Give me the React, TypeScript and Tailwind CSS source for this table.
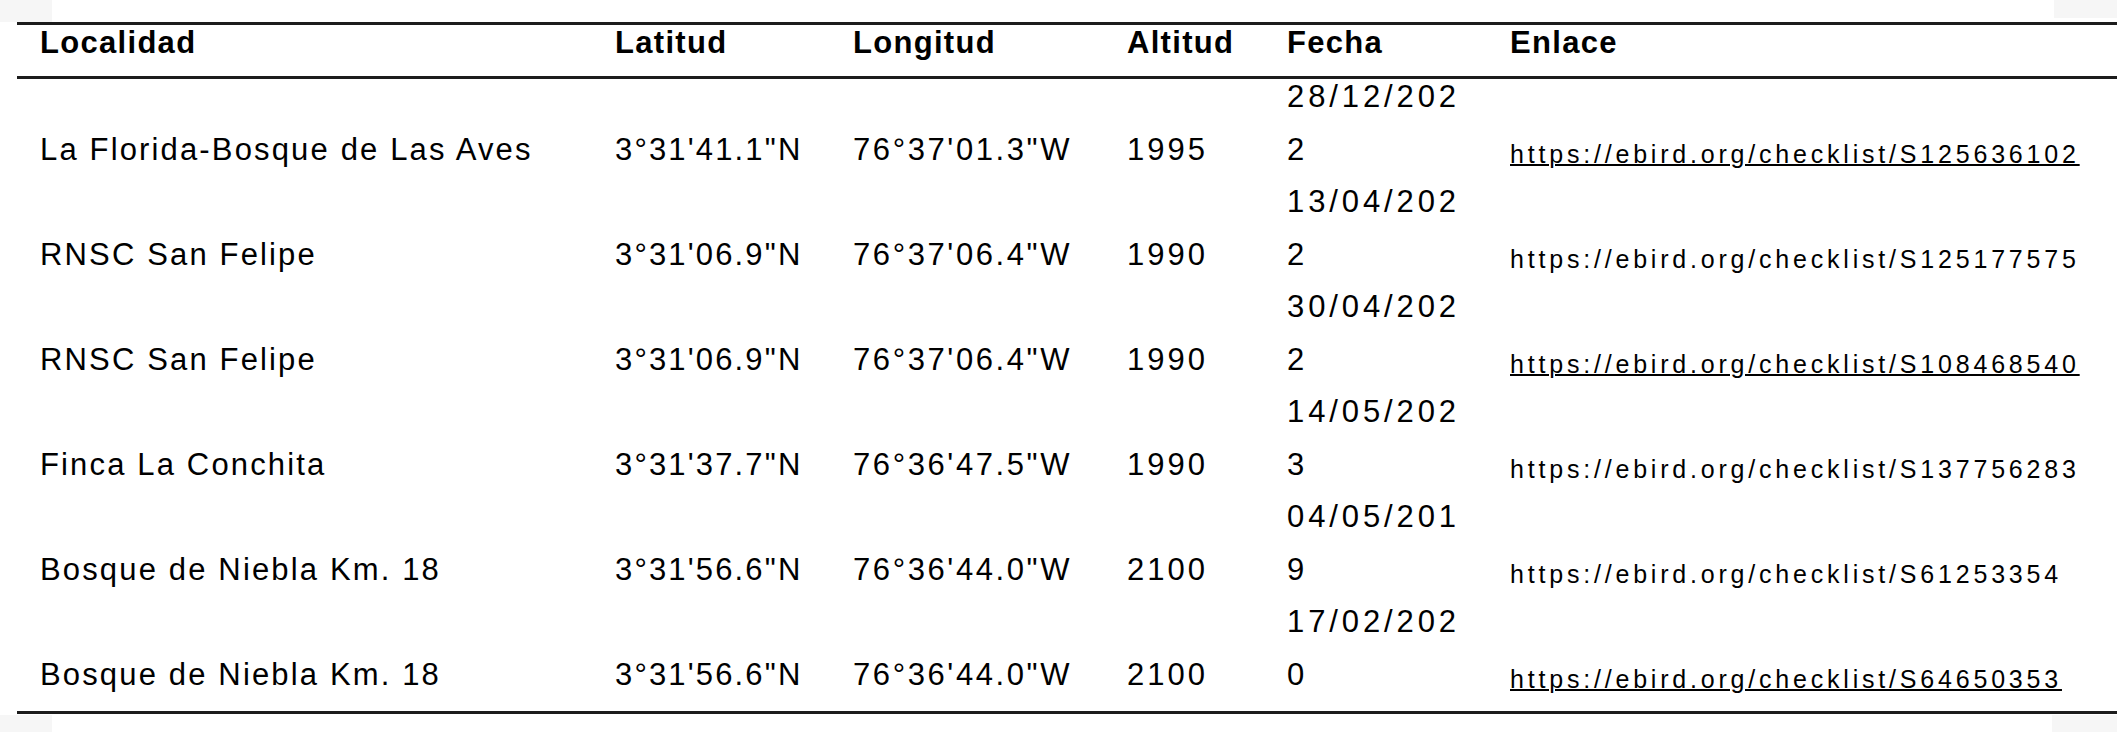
const cols = "grid grid-cols-[598px_238px_274px_160px_223px_1fr]";

const header = ["Localidad", "Latitud", "Longitud", "Altitud", "Fecha", "Enlace"];

const rows = [
  {
    loc: "La Florida-Bosque de Las Aves",
    lat: "3°31'41.1\"N",
    lon: "76°37'01.3\"W",
    alt: "1995",
    date: ["28/12/202", "2"],
    link: "https://ebird.org/checklist/S125636102",
    underline: true,
  },
  {
    loc: "RNSC San Felipe",
    lat: "3°31'06.9\"N",
    lon: "76°37'06.4\"W",
    alt: "1990",
    date: ["13/04/202", "2"],
    link: "https://ebird.org/checklist/S125177575",
    underline: false,
  },
  {
    loc: "RNSC San Felipe",
    lat: "3°31'06.9\"N",
    lon: "76°37'06.4\"W",
    alt: "1990",
    date: ["30/04/202", "2"],
    link: "https://ebird.org/checklist/S108468540",
    underline: true,
  },
  {
    loc: "Finca La Conchita",
    lat: "3°31'37.7\"N",
    lon: "76°36'47.5\"W",
    alt: "1990",
    date: ["14/05/202", "3"],
    link: "https://ebird.org/checklist/S137756283",
    underline: false,
  },
  {
    loc: "Bosque de Niebla Km. 18",
    lat: "3°31'56.6\"N",
    lon: "76°36'44.0\"W",
    alt: "2100",
    date: ["04/05/201", "9"],
    link: "https://ebird.org/checklist/S61253354",
    underline: false,
  },
  {
    loc: "Bosque de Niebla Km. 18",
    lat: "3°31'56.6\"N",
    lon: "76°36'44.0\"W",
    alt: "2100",
    date: ["17/02/202", "0"],
    link: "https://ebird.org/checklist/S64650353",
    underline: true,
  },
];

const cell = "pt-[53px] text-[31px] leading-[35px] whitespace-nowrap";

export default function App() {
  return (
    <div className="flex h-[732px] w-full flex-col overflow-hidden bg-white font-['Liberation_Sans',Arial,sans-serif] text-black">
      {/* corner marks */}
      <div className="flex h-[22px] justify-between">
        <div className="h-[22px] w-[52px] bg-[#f6f6f6]" />
        <div className="h-[18px] w-[63px] bg-[#f6f6f6]" />
      </div>

      <div className="ml-[17px]">
        {/* Header */}
        <div className={`${cols} h-[57px] border-y-[3px] border-[#1c1c1c]`}>
          {header.map((h, i) => (
            <div
              key={h}
              className={`text-[31px] font-bold leading-[35px] tracking-[1.3px] ${i === 0 ? "pl-[23px]" : ""}`}
            >
              {h}
            </div>
          ))}
        </div>

        {/* Rows */}
        <div className="border-b-[3px] border-[#1c1c1c] pb-[2px]">
          {rows.map((r, i) => (
            <div key={i} className={`${cols} h-[105px]`}>
              <div className={`${cell} pl-[23px] tracking-[2.15px]`}>{r.loc}</div>
              <div className={`${cell} tracking-[2.15px]`}>{r.lat}</div>
              <div className={`${cell} tracking-[2.6px]`}>{r.lon}</div>
              <div className={`${cell} tracking-[3px]`}>{r.alt}</div>
              <div className="flex flex-col gap-[18px] text-[31px] leading-[35px] tracking-[3.9px]">
                <div>{r.date[0]}</div>
                <div>{r.date[1]}</div>
              </div>
              <div
                className={`pt-[61px] text-[25px] leading-[28px] tracking-[3.8px] whitespace-nowrap ${
                  r.underline ? "underline decoration-2 underline-offset-[1px]" : ""
                }`}
              >
                {r.link}
              </div>
            </div>
          ))}
        </div>
      </div>

      <div className="mt-auto flex h-[17px] justify-between">
        <div className="h-[17px] w-[52px] bg-[#f6f6f6]" />
        <div className="h-[17px] w-[65px] bg-[#f6f6f6]" />
      </div>
    </div>
  );
}
